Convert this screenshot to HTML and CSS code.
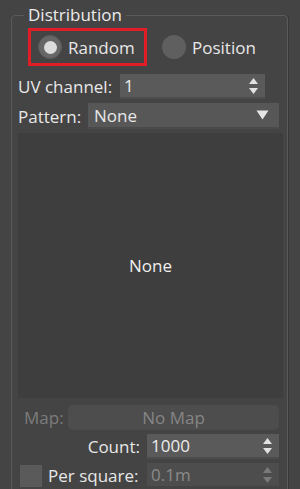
FILE: index.html
```html
<!DOCTYPE html>
<html>
<head>
  <meta charset="UTF-8">
  <title>Distribution</title>
  <link rel="stylesheet" href="styles.css">
</head>
<body>
  <fieldset class="group">
    <legend class="group-title">Distribution</legend>

    <div class="radio-row">
      <label class="radio radio-selected highlight">
        <span class="radio-dot"></span>
        <span>Random</span>
      </label>
      <label class="radio">
        <span class="radio-dot"></span>
        <span>Position</span>
      </label>
    </div>

    <div class="row row-uv">
      <span class="label label-uv">UV channel:</span>
      <div class="spinner spinner-uv">
        <span class="spinner-value">1</span>
        <svg class="spin-arrows" width="11" height="18" viewBox="0 0 11 18">
          <path d="M5.5 1 L10 7 L1 7 Z" fill="#e2e2e2"/>
          <path d="M1 11 L10 11 L5.5 17 Z" fill="#e2e2e2"/>
        </svg>
      </div>
    </div>

    <div class="row row-pattern">
      <span class="label label-pattern">Pattern:</span>
      <div class="dropdown">
        <span>None</span>
        <svg class="drop-arrow" width="13" height="10" viewBox="0 0 13 10">
          <path d="M0.5 0.5 L12.5 0.5 L6.5 9.5 Z" fill="#e6e6e6"/>
        </svg>
      </div>
    </div>

    <div class="preview">None</div>

    <div class="row row-map">
      <span class="label label-map">Map:</span>
      <div class="map-button">No Map</div>
    </div>

    <div class="row row-count">
      <span class="label label-count">Count:</span>
      <div class="spinner spinner-wide">
        <span class="spinner-value">1000</span>
        <svg class="spin-arrows" width="11" height="18" viewBox="0 0 11 18">
          <path d="M5.5 1 L10 7 L1 7 Z" fill="#e2e2e2"/>
          <path d="M1 11 L10 11 L5.5 17 Z" fill="#e2e2e2"/>
        </svg>
      </div>
    </div>

    <div class="row row-persquare">
      <span class="checkbox"></span>
      <span class="label label-persquare">Per square:</span>
      <div class="spinner spinner-wide spinner-disabled">
        <span class="spinner-value">0.1m</span>
        <svg class="spin-arrows" width="11" height="18" viewBox="0 0 11 18">
          <path d="M5.5 1 L10 7 L1 7 Z" fill="#7a7a7a"/>
          <path d="M1 11 L10 11 L5.5 17 Z" fill="#7a7a7a"/>
        </svg>
      </div>
    </div>
  </fieldset>
</body>
</html>
```

FILE: styles.css
```css
html, body {
  margin: 0;
  height: 100%;
  overflow: hidden;
}
body {
  background: #444444;
  color: #e8e8e8;
  font-family: "Open Sans", "Noto Sans", sans-serif;
  font-size: 17px;
}
.group {
  margin: 4px 12px 0 11px;
  padding: 0 4px 40px 6px;
  border: 1px solid #5a5a5a;
  border-radius: 4px;
  box-shadow: 1px 0 0 #383838;
  min-width: 0;
}
.group-title {
  margin-left: 6px;
  padding: 0 4px;
  font-size: 17px;
  line-height: 22px;
  color: #ececec;
}
.radio-row {
  display: flex;
  align-items: center;
  margin-top: 2px;
  height: 38px;
}
.radio {
  display: flex;
  align-items: center;
  gap: 6px;
  height: 38px;
  box-sizing: border-box;
}
.highlight {
  margin-left: 10px;
  width: 119px;
  padding-left: 7px;
  border: 3px solid #e11d26;
}
.radio + .radio {
  margin-left: 15px;
}
.radio-dot {
  width: 24px;
  height: 24px;
  border-radius: 50%;
  background: #5f5f5f;
  box-sizing: border-box;
  display: flex;
  align-items: center;
  justify-content: center;
}
.radio-selected .radio-dot {
  background: #676767;
  border: 1px solid #595959;
}
.radio-selected .radio-dot::after {
  content: "";
  width: 13px;
  height: 13px;
  border-radius: 50%;
  background: #dcdcdc;
}
.row {
  display: flex;
  align-items: center;
  height: 25px;
  margin-top: 4px;
}
.row-uv {
  margin-top: 8px;
}
.label {
  flex: none;
  white-space: nowrap;
}
.label-uv {
  width: 102px;
}
.label-pattern {
  width: 70px;
}
.spinner {
  position: relative;
  display: flex;
  align-items: center;
  height: 25px;
  box-sizing: border-box;
  padding-left: 4px;
  background: #5a5a5a;
  border-bottom: 2px solid #4c4c4c;
  color: #ececec;
}
.spinner-uv {
  width: 145px;
}
.spin-arrows {
  margin-left: auto;
  margin-right: 6px;
}
.row-pattern {
  height: 26px;
}
.dropdown {
  display: flex;
  align-items: center;
  width: 191px;
  height: 26px;
  box-sizing: border-box;
  padding-left: 6px;
  background: #575757;
  border-bottom: 2px solid #4a4a4a;
}
.drop-arrow {
  margin-left: auto;
  margin-right: 10px;
}
.preview {
  margin-top: 4px;
  width: 265px;
  height: 265px;
  background: #3e3e3e;
  display: flex;
  align-items: center;
  justify-content: center;
  color: #f0f0f0;
}
.row-map {
  margin-top: 7px;
}
.label-map {
  width: 44px;
  padding-left: 6px;
  color: #7c7c7c;
}
.map-button {
  width: 211px;
  height: 25px;
  border-radius: 5px;
  background: #4d4d4d;
  color: #858585;
  display: flex;
  align-items: center;
  justify-content: center;
}
.label-count {
  width: 122px;
  padding-right: 7px;
  text-align: right;
}
.spinner-wide {
  width: 132px;
}
.checkbox {
  flex: none;
  width: 22px;
  height: 22px;
  margin-left: 2px;
  background: #5a5a5a;
}
.label-persquare {
  width: 99px;
  padding-left: 6px;
}
.spinner-disabled {
  background: #4d4d4d;
  border-bottom-color: #444444;
  color: #8a8a8a;
}
```
